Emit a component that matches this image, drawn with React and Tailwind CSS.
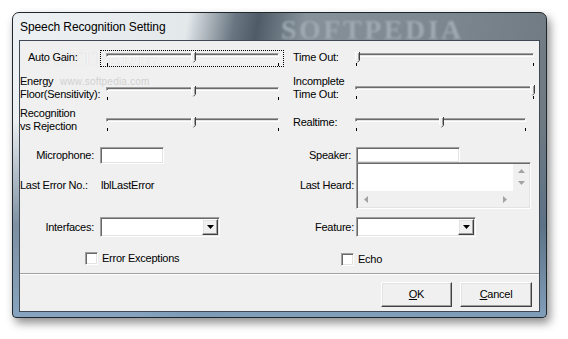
import React from "react";

// classic 3D edges
const sunken =
  "border border-t-[#a0a0a0] border-l-[#a0a0a0] border-r-white border-b-white shadow-[inset_1px_1px_0_#696969,inset_-1px_-1px_0_#e3e3e3]";
const raised =
  "border border-t-white border-l-white border-r-[#404040] border-b-[#404040] shadow-[inset_-1px_-1px_0_#a0a0a0,inset_1px_1px_0_#e3e3e3]";

function Slider({ className, track, value, focused }) {
  const center = 8 + value * (track - 4);
  return (
    <div
      className={`relative h-[17px] shrink-0 ${className} ${
        focused ? "outline-1 outline-dotted outline-black -outline-offset-1" : ""
      }`}
    >
      <div className="ml-[6px] mr-[5px] mt-[3px] h-[4px] border border-t-[#a0a0a0] border-l-[#a0a0a0] border-r-white border-b-white bg-[#e3e3e3] shadow-[inset_1px_1px_0_#696969]" />
      <svg
        className="absolute top-[2px]"
        style={{ left: center - 2 }}
        width="5"
        height="11"
        viewBox="0 0 5 11"
      >
        <path d="M0 0H5V8L2.5 10.5L0 8Z" fill="#f0f0f0" />
        <path d="M0.5 8V0.5H4" stroke="#fff" fill="none" />
        <path d="M4.5 0V8.2L2.5 10.3" stroke="#404040" fill="none" />
        <path d="M3.5 1V7.8" stroke="#a0a0a0" fill="none" />
      </svg>
      <div className="absolute top-[13px] left-[7px] w-px h-[3px] bg-black" />
      <div className="absolute top-[13px] right-[5px] w-px h-[3px] bg-black" />
    </div>
  );
}

function Combo({ className }) {
  return (
    <div className={`h-[20px] bg-white flex justify-end p-px ${sunken} ${className}`}>
      <div className={`w-[16px] h-full bg-[#f0f0f0] flex items-center justify-center ${raised}`}>
        <svg width="7" height="4" viewBox="0 0 7 4">
          <path d="M0 0H7L3.5 4Z" fill="#000" />
        </svg>
      </div>
    </div>
  );
}

function Check({ label }) {
  return (
    <div className="flex items-center h-[13px]">
      <div className={`w-[13px] h-[13px] bg-white ${sunken}`} />
      <span className="ml-[4px]">{label}</span>
    </div>
  );
}

function Arrow({ d }) {
  return (
    <svg width="7" height="4" viewBox="0 0 7 4" className="shrink-0">
      <path d={d} fill="#a3a3a3" />
    </svg>
  );
}

function ArrowV({ d }) {
  return (
    <svg width="4" height="7" viewBox="0 0 4 7" className="shrink-0">
      <path d={d} fill="#a3a3a3" />
    </svg>
  );
}

export default function App() {
  return (
    <div className="w-[568px] h-[339px] bg-white pl-[12px] pt-[12px] overflow-hidden font-['Liberation_Sans',Arial,sans-serif] text-[11px] text-black">
      <div className="relative w-[535px] h-[306px] flex flex-col rounded-t-[7px] rounded-b-[4px] border border-[#1f262c] px-[6px] pb-[5px] overflow-hidden shadow-[3px_5px_10px_rgba(0,0,0,0.45)] bg-[image:linear-gradient(180deg,transparent_0%,transparent_35%,rgba(88,112,136,0.75)_70%,rgba(130,160,188,0.95)_100%),linear-gradient(100deg,#eef1f3_0%,#e3e8eb_30%,#6a7782_38%,#4f5c67_42%,#86919a_50%,#7b868f_75%,#6b767e_100%)]">
        {/* blurred glass watermark */}
        <span className="absolute left-[268px] top-[-4px] font-['Liberation_Serif',serif] font-bold text-[28px] tracking-[2.5px] text-[#9ea9b1] blur-[1px] pointer-events-none">
          SOFTPEDIA
        </span>

        {/* Title */}
        <div className="relative h-[27px] flex items-center pl-px text-[12px] tracking-[-0.1px]">
          Speech Recognition Setting
        </div>

        {/* Client area */}
        <div className="relative flex-1 flex flex-col pt-[9px] border border-[#3d4852] bg-[#f0f0f0] leading-[13px] tracking-[-0.25px]">
          <span className="absolute left-[20px] top-[7px] font-['Liberation_Serif',serif] text-[20px] leading-[20px] tracking-[1.5px] text-[#f3f3f3] [text-shadow:0_0_1px_#d2d2d2] pointer-events-none">
            SOFTPEDIA
          </span>
          <span className="absolute left-[40px] top-[34px] text-[10px] tracking-[0.2px] text-[#d0d0d0] pointer-events-none">
            www.softpedia.com
          </span>

          {/* sliders */}
          <div className="relative flex h-[18px]">
            <div className="flex w-[265px]">
              <div className="w-[80px] pl-[8px] pt-px">Auto Gain:</div>
              <Slider className="w-[184px]" track={173} value={0.5} focused />
            </div>
            <div className="flex">
              <div className="w-[64px] pl-[8px] pt-px">Time Out:</div>
              <Slider className="w-[190px]" track={179} value={0} />
            </div>
          </div>

          <div className="relative flex h-[26px] mt-[7px]">
            <div className="flex w-[265px]">
              <div className="w-[80px] whitespace-nowrap">
                Energy
                <br />
                Floor(Sensitivity):
              </div>
              <Slider className="w-[184px] mt-[9px]" track={173} value={0.5} />
            </div>
            <div className="flex">
              <div className="w-[64px] pl-[8px]">
                Incomplete
                <br />
                Time Out:
              </div>
              <Slider className="w-[190px] mt-[8px]" track={179} value={1} />
            </div>
          </div>

          <div className="relative flex h-[26px] mt-[6px]">
            <div className="flex w-[265px]">
              <div className="w-[80px] whitespace-nowrap">
                Recognition
                <br />
                vs Rejection
              </div>
              <Slider className="w-[184px] mt-[8px]" track={173} value={0.5} />
            </div>
            <div className="flex">
              <div className="w-[64px] pl-[8px] pt-[9px]">Realtime:</div>
              <Slider className="w-[182px] mt-[8px]" track={171} value={0.5} />
            </div>
          </div>

          {/* fields */}
          <div className="flex mt-[14px] h-[119px]">
            <div className="flex flex-col w-[265px]">
              <div className="flex items-center h-[17px]">
                <div className="w-[74px] mr-[6px] text-right">Microphone:</div>
                <div className={`w-[64px] h-[17px] bg-white ${sunken}`} />
              </div>
              <div className="flex h-[13px] mt-[15px]">
                <div className="w-[81px]">Last Error No.:</div>
                <div>lblLastError</div>
              </div>
              <div className="flex items-center h-[20px] mt-[25px]">
                <div className="w-[74px] mr-[6px] text-right">Interfaces:</div>
                <Combo className="w-[120px]" />
              </div>
              <div className="mt-[15px] pl-[65px]">
                <Check label="Error Exceptions" />
              </div>
            </div>

            <div className="flex flex-col">
              <div className="flex items-center h-[16px]">
                <div className="w-[66px] mr-[5px] text-right">Speaker:</div>
                <div className={`w-[104px] h-[16px] bg-white ${sunken}`} />
              </div>
              <div className="flex items-center h-[47px] -mt-px">
                <div className="w-[69px] mr-[2px] text-right">Last Heard:</div>
                <div className={`w-[175px] h-[47px] bg-white p-px flex flex-col ${sunken}`}>
                  <div className="flex flex-1">
                    <div className="flex-1" />
                    <div className="w-[16px] bg-[#f0f0f0] flex flex-col justify-between items-center pt-[5px] pb-[6px]">
                      <Arrow d="M0 4H7L3.5 0Z" />
                      <Arrow d="M0 0H7L3.5 4Z" />
                    </div>
                  </div>
                  <div className="flex h-[16px]">
                    <div className="flex-1 bg-[#f0f0f0] flex items-center justify-between px-[6px]">
                      <ArrowV d="M4 0V7L0 3.5Z" />
                      <ArrowV d="M0 0V7L4 3.5Z" />
                    </div>
                    <div className="w-[16px] bg-[#f0f0f0]" />
                  </div>
                </div>
              </div>
              <div className="flex items-center h-[20px] mt-[8px]">
                <div className="w-[69px] mr-[2px] text-right">Feature:</div>
                <Combo className="w-[120px]" />
              </div>
              <div className="mt-[16px] pl-[56px]">
                <Check label="Echo" />
              </div>
            </div>
          </div>

          {/* separator */}
          <div className="mt-[7px] h-px bg-[#a0a0a0]" />
          <div className="h-px bg-white" />

          {/* buttons */}
          <div className="flex justify-end gap-[8px] mt-[7px] pr-[7px]">
            <button type="button" className={`w-[71px] h-[25px] bg-[#f0f0f0] ${raised}`}>
              <span className="underline">O</span>K
            </button>
            <button type="button" className={`w-[72px] h-[25px] bg-[#f0f0f0] ${raised}`}>
              <span className="underline">C</span>ancel
            </button>
          </div>
        </div>
      </div>
    </div>
  );
}
